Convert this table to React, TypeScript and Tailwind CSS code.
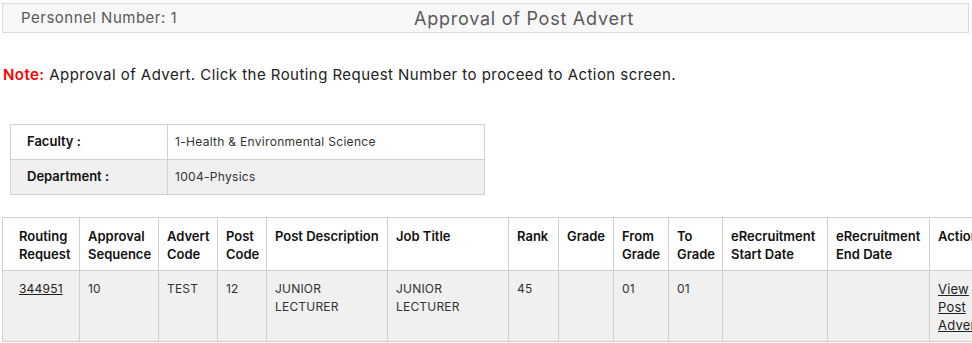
const font = { fontFamily: "Inter, 'DejaVu Sans', sans-serif" };

const columns = [
  { label: ["Routing", "Request"], w: "w-[77px]", first: true },
  { label: ["Approval", "Sequence"], w: "w-[79px]" },
  { label: ["Advert", "Code"], w: "w-[59px]" },
  { label: ["Post", "Code"], w: "w-[49px]" },
  { label: ["Post Description"], w: "w-[121px]" },
  { label: ["Job Title"], w: "w-[121px]" },
  { label: ["Rank"], w: "w-[50px]" },
  { label: ["Grade"], w: "w-[55px]" },
  { label: ["From", "Grade"], w: "w-[55px]" },
  { label: ["To", "Grade"], w: "w-[54px]" },
  { label: ["eRecruitment", "Start Date"], w: "w-[105px]" },
  { label: ["eRecruitment", "End Date"], w: "w-[102px]" },
  { label: ["Action"], w: "w-[90px]" },
];

export default function App() {
  return (
    <div
      className="w-[972px] h-[343px] overflow-hidden bg-white"
      style={font}
    >
      {/* page header */}
      <div className="mx-[2px] mt-[3px] w-[967px] h-[30px] flex items-center border border-[#dcdcdc] bg-[#f7f7f7]">
        <div className="w-[411px] pl-[18px] text-[15px] tracking-[0.5px] text-[#5a5a5a]">
          Personnel Number: 1
        </div>
        <div className="text-[18px] tracking-[0.75px] text-[#5a5a5a]">
          Approval of Post Advert
        </div>
      </div>

      {/* note */}
      <p className="mt-[31px] ml-[3px] text-[15px] tracking-[0.45px] text-[#222]">
        <span className="font-semibold text-[#ff0000]">Note:</span> Approval of
        Advert. Click the Routing Request Number to proceed to Action screen.
      </p>

      {/* faculty / department */}
      <table className="mt-[37px] ml-[10px] w-[475px] border-collapse text-[12px]">
        <tbody>
          <tr className="bg-white">
            <td className="w-[157px] h-[35px] border border-[#d0d0d0] pl-[16px] text-[13px] font-semibold text-[#111]">
              Faculty :
            </td>
            <td className="border border-[#d0d0d0] pl-[7px] tracking-[0.3px] text-[#333]">
              1-Health &amp; Environmental Science
            </td>
          </tr>
          <tr className="bg-[#f0f0f0]">
            <td className="h-[35px] border border-[#d0d0d0] pl-[16px] text-[13px] font-semibold text-[#111]">
              Department :
            </td>
            <td className="border border-[#d0d0d0] pl-[7px] tracking-[0.3px] text-[#333]">
              1004-Physics
            </td>
          </tr>
        </tbody>
      </table>

      {/* adverts */}
      <table className="mt-[22px] ml-[2px] table-fixed border-collapse text-[12px] w-[1017px]">
        <thead>
          <tr className="bg-white">
            {columns.map((c) => (
              <th
                key={c.label.join(" ")}
                className={`${c.w} ${
                  c.first ? "pl-[16px]" : "pl-[8px]"
                } pr-[2px] pt-[9px] pb-[7px] h-[52px] align-top text-left text-[13px] font-semibold leading-[18px] text-[#111] border border-[#cfcfcf]`}
              >
                {c.label.map((l) => (
                  <div key={l} className="whitespace-nowrap">
                    {l}
                  </div>
                ))}
              </th>
            ))}
          </tr>
        </thead>
        <tbody>
          <tr className="bg-[#f0f0f0] text-[#333] leading-[18px] align-top tracking-[0.2px]">
            <td className="pl-[16px] pt-[9px] pb-[8px] h-[71px] border border-[#cfcfcf]">
              <a href="#" className="underline text-[#222]">
                344951
              </a>
            </td>
            <td className="pl-[8px] pt-[9px] border border-[#cfcfcf]">10</td>
            <td className="pl-[8px] pt-[9px] border border-[#cfcfcf]">TEST</td>
            <td className="pl-[8px] pt-[9px] border border-[#cfcfcf]">12</td>
            <td className="pl-[8px] pt-[9px] border border-[#cfcfcf]">
              JUNIOR
              <br />
              LECTURER
            </td>
            <td className="pl-[8px] pt-[9px] border border-[#cfcfcf]">
              JUNIOR
              <br />
              LECTURER
            </td>
            <td className="pl-[8px] pt-[9px] border border-[#cfcfcf]">45</td>
            <td className="pl-[8px] pt-[9px] border border-[#cfcfcf]"></td>
            <td className="pl-[8px] pt-[9px] border border-[#cfcfcf]">01</td>
            <td className="pl-[8px] pt-[9px] border border-[#cfcfcf]">01</td>
            <td className="pl-[8px] pt-[9px] border border-[#cfcfcf]"></td>
            <td className="pl-[8px] pt-[9px] border border-[#cfcfcf]"></td>
            <td className="pl-[8px] pt-[9px] border border-[#cfcfcf] text-[13px]">
              <a href="#" className="underline text-[#222]">
                View
                <br />
                Post
                <br />
                Advert
              </a>
            </td>
          </tr>
        </tbody>
      </table>
    </div>
  );
}
